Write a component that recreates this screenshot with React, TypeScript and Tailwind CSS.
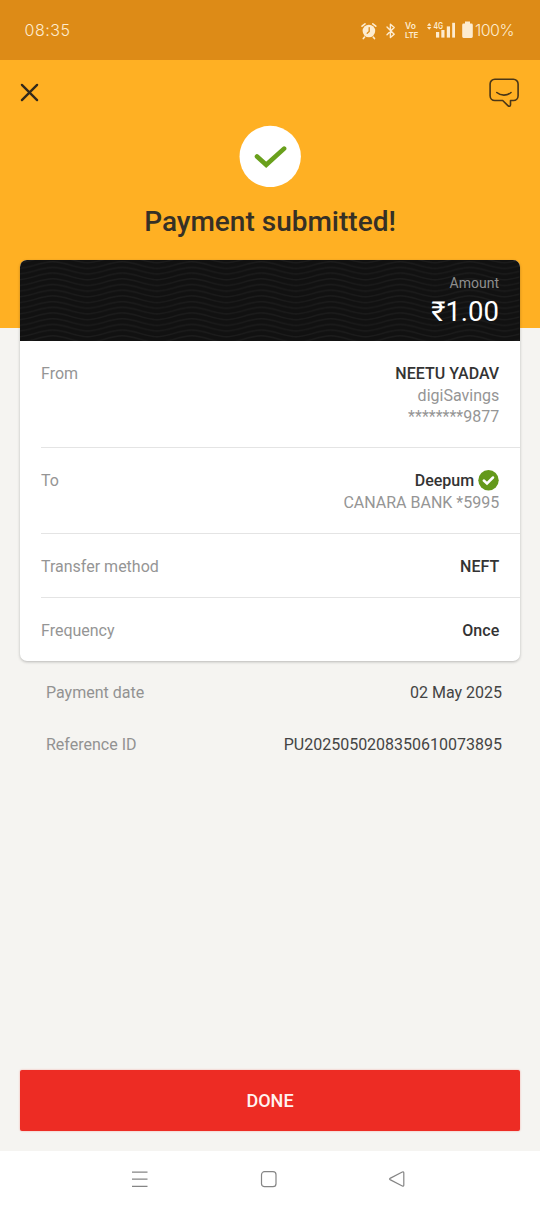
import type { ReactNode } from "react";

function StatusIcons() {
  return (
    <div className="mt-[2px] flex h-5 items-start text-[#fdecd0]">
      <svg width="45" height="20" viewBox="360 22 45 20" fill="none" stroke="currentColor" strokeLinecap="round" strokeWidth="1.6">
        <circle cx="368.9" cy="32" r="6.3" fill="currentColor" stroke="none" />
        <path d="M362 27.2l3-2.4M375.8 27.2l-3-2.4M364.6 38l-1.3 1.6M373.2 38l1.3 1.6" />
        <path d="M369.2 28.6v3.8l-2 1.8" stroke="#dd8b17" strokeWidth="1.3" />
        <path d="M387 28l7.2 7.2-3.8 3.400V25.200l3.800 3.400-7.200 7.200" strokeWidth="1.400" strokeLinejoin="round" />
      </svg>
      <div className="flex w-[22px] flex-col pt-px font-semibold">
        <span className="text-[8.500px] leading-[9px] tracking-[0px]">Vo</span>
        <span className="text-[8px] leading-[9px] tracking-[-0.200px]">LTE</span>
      </div>
      <svg width="47" height="20" viewBox="427 22 47 20" fill="currentColor">
        <text x="433.400" y="30.400" fontSize="8.400" fontWeight="600" textLength="9.600" lengthAdjust="spacingAndGlyphs">4G</text>
        <path d="M427 26.800l2.200-2.800 2.200 2.800zM427 28l2.200 2.800 2.200-2.800z" />
        <rect x="436" y="33" width="3.200" height="5.600" />
        <rect x="441.300" y="31" width="3.200" height="7.600" />
        <rect x="446.800" y="27.400" width="3.200" height="11.200" />
        <rect x="452.200" y="23.800" width="2.800" height="14.800" />
        <path d="M465 22.600h5v2h1.400a1.400 1.400 0 011.400 1.400v11.600a1.400 1.400 0 01-1.400 1.400h-7.800a1.400 1.400 0 01-1.400-1.400V26a1.400 1.400 0 011.400-1.400H465z" />
      </svg>
    </div>
  );
}

function WavePattern() {
  return (
    <svg className="absolute inset-0 h-full w-full" aria-hidden="true">
      <defs>
        <pattern id="waves" width="69.500" height="5.700" patternUnits="userSpaceOnUse" x="-2">
          <path
            d="M0 -3.100C12 -3.100 22 -9.700 34.750 -9.700S57.500 -3.100 69.500 -3.100M0 2.600C12 2.600 22 -4 34.750 -4S57.500 2.600 69.500 2.600M0 8.300C12 8.300 22 1.700 34.750 1.700S57.500 8.300 69.500 8.300M0 14C12 14 22 7.400 34.750 7.400S57.500 14 69.500 14"
            fill="none"
            stroke="#1c1c1c"
            strokeWidth="1.300"
          />
        </pattern>
      </defs>
      <rect width="100%" height="100%" fill="url(#waves)" />
    </svg>
  );
}

function Row({ label, children, last }: { label: string; children: ReactNode; last?: boolean }) {
  return (
    <div className={last ? "flex justify-between pt-[22px] pr-[20.500px] pb-[19.500px]" : "flex justify-between border-b border-[#e4e4e4] pt-[22px] pr-[20.500px] pb-[19.500px]"}>
      <span className="text-[#959595]">{label}</span>
      <div className="text-right text-[#959595]">{children}</div>
    </div>
  );
}

function Strong({ children }: { children: ReactNode }) {
  return <span className="font-medium text-[#333333]">{children}</span>;
}

export default function App() {
  return (
    <div className="flex h-[1207px] w-[540px] flex-col overflow-hidden bg-[#f5f4f1] font-['Roboto',sans-serif] text-[16px] leading-[21.5px]">
      <header className="h-[328px] shrink-0 bg-[#ffb023]">
        <div className="flex h-[60px] items-center justify-between bg-[#dd8b17] pr-[26px] pl-[24.500px] font-['Inter',sans-serif] text-[#fdecd0]">
          <span className="pt-[2px] text-[16px] font-light tracking-[0.500px]">08:35</span>
          <div className="flex items-center gap-px">
            <StatusIcons />
            <span className="pt-[2px] text-[16px] font-light tracking-[-0.500px]">100%</span>
          </div>
        </div>
        <div className="flex h-[65px] items-center justify-between px-[20px]">
          <svg width="19" height="19" viewBox="0 0 19 19" fill="none" stroke="#33291b" strokeWidth="2.300" strokeLinecap="round">
            <path d="M1.900 1.900l15.200 15.200M17.100 1.900L1.900 17.100" />
          </svg>
          <svg width="32" height="30" viewBox="0 0 32 30" fill="none" stroke="#4b3717" strokeWidth="1.600" strokeLinecap="round" strokeLinejoin="round">
            <path d="M6.800 1.300h18.600a4.700 4.700 0 014.700 4.700v11.800a4.700 4.700 0 01-4.700 4.700h-2.900v4.300c0 1.600-1.400 2-2.600.8l-5.200-5.100H6.800a4.700 4.700 0 01-4.700-4.700V6a4.700 4.700 0 014.700-4.700z" />
            <path d="M8.800 14.500c4 3.500 10.200 3.500 14.200 0" />
          </svg>
        </div>
        <div className="flex flex-col items-center">
          <svg width="62" height="62" viewBox="0 0 62 62" fill="none">
            <circle cx="31.200" cy="31.500" r="30.700" fill="#fff" />
            <path d="M18 31.500l9.200 8.300 17.900-16.200" stroke="#69a01c" strokeWidth="4.600" strokeLinecap="round" />
          </svg>
          <h1 className="mt-[18px] text-[28px] leading-[34px] font-medium text-[#363026]">Payment submitted!</h1>
        </div>
      </header>

      <section className="relative mx-[20.300px] -mt-[68px] rounded-[7px] bg-white shadow-[0_1px_3px_rgba(0,0,0,0.250)]">
        <div className="relative h-[81px] overflow-hidden rounded-t-[7px] bg-[#111111]">
          <WavePattern />
          <div className="relative flex flex-col items-end pt-[14px] pr-[20.700px]">
            <span className="text-[14px] leading-[18px] text-[#8e8e8e]">Amount</span>
            <span className="mt-[4px] text-[27.500px] leading-[32px] text-white">₹1.00</span>
          </div>
        </div>
        <div className="pl-[20.700px]">
          <Row label="From">
            <Strong>NEETU YADAV</Strong>
            <p>digiSavings</p>
            <p>********9877</p>
          </Row>
          <Row label="To">
            <div className="flex items-center justify-end gap-1">
              <Strong>Deepum</Strong>
              <svg width="21" height="21" viewBox="0 0 21 21" fill="none">
                <circle cx="10.500" cy="10.200" r="10.200" fill="#64991b" />
                <path d="M5.800 10.500l3.200 3 6-6" stroke="#fff" strokeWidth="2.500" strokeLinecap="round" />
              </svg>
            </div>
            <p>CANARA BANK *5995</p>
          </Row>
          <Row label="Transfer method"><Strong>NEFT</Strong></Row>
          <Row label="Frequency" last><Strong>Once</Strong></Row>
        </div>
      </section>

      <dl className="mt-[21px] flex flex-col gap-[30.500px] pr-[38px] pl-[46px]">
        <div className="flex justify-between">
          <dt className="text-[#929292]">Payment date</dt>
          <dd className="text-[#444444]">02 May 2025</dd>
        </div>
        <div className="flex justify-between">
          <dt className="text-[#929292]">Reference ID</dt>
          <dd className="text-[#444444]">PU2025050208350610073895</dd>
        </div>
      </dl>

      <button className="mx-[20.300px] mt-auto h-[61px] shrink-0 rounded-[2px] bg-[#ed2c24] text-[18px] font-medium text-[#fff3f0] shadow-[0_0_2px_rgba(237,44,36,0.400)]">
        DONE
      </button>

      <nav className="mt-[20px] flex h-[56px] shrink-0 justify-between bg-white pt-[19px] pr-[134px] pl-[131px]">
        <svg width="17" height="18" viewBox="0 0 17 18" stroke="#858585" strokeWidth="1.200">
          <path d="M1 2.100h15.500M1 9.200h15.500M1 16.300h15.500" />
        </svg>
        <svg width="18" height="18" viewBox="0 0 18 18" fill="none" stroke="#858585" strokeWidth="1.200">
          <rect x="2.500" y="1.700" width="14.500" height="15" rx="3" />
        </svg>
        <svg width="18" height="18" viewBox="0 0 18 18" fill="none" stroke="#858585" strokeWidth="1.200" strokeLinejoin="round">
          <path d="M2 8.400L14.300 2q1.500-.6 1.500 1v12q0 1.600-1.500 1L2 9.600q-1-.6 0-1.200z" />
        </svg>
      </nav>
    </div>
  );
}
